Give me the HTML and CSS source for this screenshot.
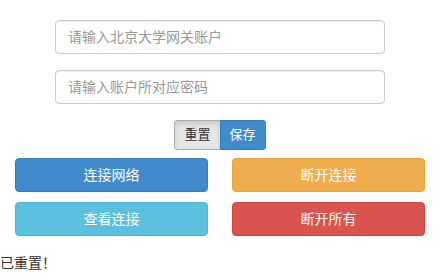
FILE: index.html
```html
<!DOCTYPE html>
<html lang="zh-CN">
<head>
    <meta charset="UTF-8">
    <meta name="viewport" content="width=device-width, initial-scale=1.0">
    <title>网关</title>
    <link rel="stylesheet" href="styles.css">
</head>
<body>
    <div class="login-form">
        <input type="text" class="form-input" placeholder="请输入北京大学网关账户">
        <input type="password" class="form-input" placeholder="请输入账户所对应密码">
        <div class="btn-group">
            <button class="btn btn-small btn-default">重置</button>
            <button class="btn btn-small btn-save">保存</button>
        </div>
    </div>
    <div class="action-grid">
        <button class="btn btn-big btn-primary">连接网络</button>
        <button class="btn btn-big btn-warning">断开连接</button>
        <button class="btn btn-big btn-info">查看连接</button>
        <button class="btn btn-big btn-danger">断开所有</button>
    </div>
    <div class="status">已重置！</div>
</body>
</html>
```

FILE: styles.css
```css
body, html {
    margin: 0;
    background-color: #ffffff;
    color: #333333;
    font-family: "Liberation Sans", "Noto Sans CJK SC", sans-serif;
    font-size: 14px;
}
.login-form {
    display: flex;
    flex-direction: column;
    align-items: center;
    padding-top: 20px;
}
.form-input {
    width: 330px;
    height: 34px;
    box-sizing: border-box;
    margin-bottom: 16px;
    padding: 6px 12px;
    border: 1px solid #cccccc;
    border-radius: 4px;
    font-family: inherit;
    font-size: 14px;
    color: #555555;
    box-shadow: inset 0 1px 1px rgba(0, 0, 0, 0.075);
}
.form-input::placeholder {
    color: #999999;
}
.btn-group {
    display: flex;
}
.btn {
    font-family: inherit;
    font-size: 14px;
    line-height: 20px;
    padding: 4px 11px;
    border: 1px solid transparent;
    border-radius: 4px;
    cursor: pointer;
}
.btn-small {
    font-size: 13px;
    line-height: 18px;
    height: 30px;
    padding: 5px 9px;
}
.btn-group .btn-default {
    background-color: #e6e6e6;
    border-color: #adadad;
    color: #333333;
    border-radius: 3px 0 0 3px;
    box-shadow: inset 0 3px 5px rgba(0, 0, 0, 0.125);
}
.btn-group .btn-save {
    background-color: #428bca;
    border-color: #357ebd;
    color: #ffffff;
    border-radius: 0 3px 3px 0;
    margin-left: -1px;
}
.action-grid {
    display: grid;
    grid-template-columns: 1fr 1fr;
    column-gap: 24px;
    row-gap: 10px;
    padding: 8px 15px 0;
}
.btn-big {
    height: 34px;
    color: #ffffff;
}
.btn-primary {
    background-color: #428bca;
    border-color: #357ebd;
}
.btn-warning {
    background-color: #f0ad4e;
    border-color: #eea236;
}
.btn-info {
    background-color: #5bc0de;
    border-color: #46b8da;
}
.btn-danger {
    background-color: #d9534f;
    border-color: #d43f3a;
}
.status {
    margin-top: 17px;
    line-height: 20px;
}
```
